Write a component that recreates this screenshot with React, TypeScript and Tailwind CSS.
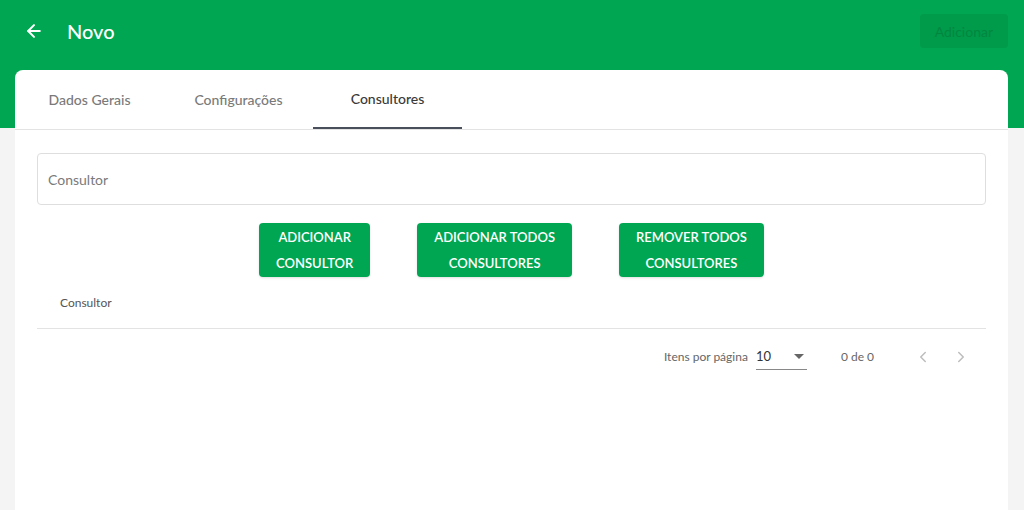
import { ArrowLeft, ChevronLeft, ChevronRight } from 'lucide-react';

const tabs = ['Dados Gerais', 'Configurações', 'Consultores'];

function ActionButton({ linhas }: { linhas: string[] }) {
  return (
    <button className="rounded bg-[#00a651] px-[17px] py-[1px] text-[13px] font-semibold uppercase leading-[26px] text-white shadow-sm">
      {linhas.map((l) => (
        <div key={l}>{l}</div>
      ))}
    </button>
  );
}

export default function App() {
  return (
    <div className="relative min-h-[510px] bg-[#f4f4f4] font-['Lato',sans-serif]">
      <div className="h-[128px] bg-[#00a651]">
        <div className="flex h-[62px] items-center justify-between pl-[24px] pr-[16px]">
          <div className="flex items-center gap-[23px] text-white">
            <ArrowLeft size={20} strokeWidth={2.4} />
            <span className="text-[20px] font-medium">Novo</span>
          </div>
          <button className="h-[34px] rounded bg-[#009a4b] px-[15px] text-[14px] text-[#00873f]">
            Adicionar
          </button>
        </div>
      </div>

      <div className="-mt-[58px] ml-[15px] mr-[16px] min-h-[440px] rounded-t-[8px] bg-white">
        <div className="flex h-[60px] border-b border-[#e3e3e3]">
          {tabs.map((t, i) => (
            <div
              key={t}
              className={
                'flex w-[149px] items-center justify-center text-[14px] ' +
                (i === 2
                  ? 'border-b-2 border-[#4a4f5c] font-medium text-[#3a3a3a]'
                  : 'font-medium text-[#7a7a7a]')
              }
            >
              {t}
            </div>
          ))}
        </div>

        <div className="px-[22px] pt-[23px]">
          <div className="flex h-[52px] items-center rounded border border-[#dedede] px-[10px] text-[14px] text-[#7a7a7a]">
            Consultor
          </div>

          <div className="mt-[18px] flex justify-center gap-[47px]">
            <ActionButton linhas={['Adicionar', 'Consultor']} />
            <ActionButton linhas={['Adicionar todos', 'consultores']} />
            <ActionButton linhas={['Remover todos', 'consultores']} />
          </div>

          <div className="flex h-[52px] items-center border-b border-[#e3e3e3] pl-[23px] text-[12px] text-[#555]">
            Consultor
          </div>

          <div className="flex h-[56px] items-center justify-end text-[12px] text-[#666]">
            <span>Itens por página</span>
            <div className="ml-[8px] flex h-[26px] w-[51px] items-center justify-between border-b border-[#888] text-[13px] text-[#333]">
              <span>10</span>
              <span className="mr-[3px] h-0 w-0 border-x-[5px] border-t-[5px] border-x-transparent border-t-[#666]" />
            </div>
            <span className="ml-[34px]">0 de 0</span>
            <div className="ml-[40px] mr-[16px] flex gap-[20px] text-[#bdbdbd]">
              <ChevronLeft size={18} />
              <ChevronRight size={18} />
            </div>
          </div>
        </div>
      </div>
    </div>
  );
}
